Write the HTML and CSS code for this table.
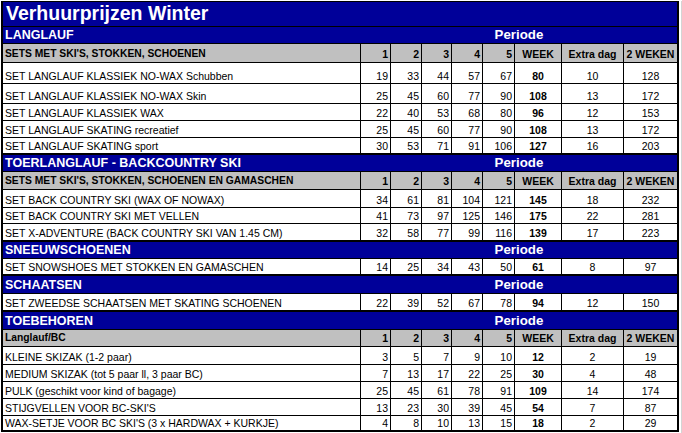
FILE: index.html
```html
<!DOCTYPE html>
<html lang="nl">
<head>
<meta charset="utf-8">
<title>Verhuurprijzen Winter</title>
<link rel="stylesheet" href="styles.css">
</head>
<body>
<div class="page">
  <div class="sheet">
    <div class="row title h24"><div class="tcell">Verhuurprijzen Winter</div></div>

    <div class="row sec h16"><div class="scell">LANGLAUF</div><div class="scell per">Periode</div></div>
    <div class="row hdr h18">
      <div class="cell d">SETS MET SKI'S, STOKKEN, SCHOENEN</div>
      <div class="cell n">1</div><div class="cell n">2</div><div class="cell n">3</div><div class="cell n">4</div><div class="cell n">5</div>
      <div class="cell c">WEEK</div><div class="cell c">Extra dag</div><div class="cell c last">2 WEKEN</div>
    </div>
    <div class="row h20">
      <div class="cell d">SET LANGLAUF KLASSIEK NO-WAX Schubben</div>
      <div class="cell n">19</div><div class="cell n">33</div><div class="cell n">44</div><div class="cell n">57</div><div class="cell n">67</div>
      <div class="cell c b">80</div><div class="cell c">10</div><div class="cell c last">128</div>
    </div>
    <div class="row h19">
      <div class="cell d">SET LANGLAUF KLASSIEK NO-WAX Skin</div>
      <div class="cell n">25</div><div class="cell n">45</div><div class="cell n">60</div><div class="cell n">77</div><div class="cell n">90</div>
      <div class="cell c b">108</div><div class="cell c">13</div><div class="cell c last">172</div>
    </div>
    <div class="row h16">
      <div class="cell d">SET LANGLAUF KLASSIEK WAX</div>
      <div class="cell n">22</div><div class="cell n">40</div><div class="cell n">53</div><div class="cell n">68</div><div class="cell n">80</div>
      <div class="cell c b">96</div><div class="cell c">12</div><div class="cell c last">153</div>
    </div>
    <div class="row h16">
      <div class="cell d">SET LANGLAUF SKATING recreatief</div>
      <div class="cell n">25</div><div class="cell n">45</div><div class="cell n">60</div><div class="cell n">77</div><div class="cell n">90</div>
      <div class="cell c b">108</div><div class="cell c">13</div><div class="cell c last">172</div>
    </div>
    <div class="row h15 thick">
      <div class="cell d">SET LANGLAUF SKATING sport</div>
      <div class="cell n">30</div><div class="cell n">53</div><div class="cell n">71</div><div class="cell n">91</div><div class="cell n">106</div>
      <div class="cell c b">127</div><div class="cell c">16</div><div class="cell c last">203</div>
    </div>

    <div class="row sec h16"><div class="scell">TOERLANGLAUF - BACKCOUNTRY SKI</div><div class="scell per">Periode</div></div>
    <div class="row hdr h17">
      <div class="cell d">SETS MET SKI'S, STOKKEN, SCHOENEN EN GAMASCHEN</div>
      <div class="cell n">1</div><div class="cell n">2</div><div class="cell n">3</div><div class="cell n">4</div><div class="cell n">5</div>
      <div class="cell c">WEEK</div><div class="cell c">Extra dag</div><div class="cell c last">2 WEKEN</div>
    </div>
    <div class="row h17">
      <div class="cell d">SET BACK COUNTRY SKI (WAX OF NOWAX)</div>
      <div class="cell n">34</div><div class="cell n">61</div><div class="cell n">81</div><div class="cell n">104</div><div class="cell n">121</div>
      <div class="cell c b">145</div><div class="cell c">18</div><div class="cell c last">232</div>
    </div>
    <div class="row h15">
      <div class="cell d">SET BACK COUNTRY SKI MET VELLEN</div>
      <div class="cell n">41</div><div class="cell n">73</div><div class="cell n">97</div><div class="cell n">125</div><div class="cell n">146</div>
      <div class="cell c b">175</div><div class="cell c">22</div><div class="cell c last">281</div>
    </div>
    <div class="row h16 thick">
      <div class="cell d">SET X-ADVENTURE (BACK COUNTRY SKI VAN 1.45 CM)</div>
      <div class="cell n">32</div><div class="cell n">58</div><div class="cell n">77</div><div class="cell n">99</div><div class="cell n">116</div>
      <div class="cell c b">139</div><div class="cell c">17</div><div class="cell c last">223</div>
    </div>

    <div class="row sec h16"><div class="scell">SNEEUWSCHOENEN</div><div class="scell per">Periode</div></div>
    <div class="row h15 thick">
      <div class="cell d">SET SNOWSHOES MET STOKKEN EN GAMASCHEN</div>
      <div class="cell n">14</div><div class="cell n">25</div><div class="cell n">34</div><div class="cell n">43</div><div class="cell n">50</div>
      <div class="cell c b">61</div><div class="cell c">8</div><div class="cell c last">97</div>
    </div>

    <div class="row sec h17"><div class="scell">SCHAATSEN</div><div class="scell per">Periode</div></div>
    <div class="row h16 thick">
      <div class="cell d">SET ZWEEDSE SCHAATSEN MET SKATING SCHOENEN</div>
      <div class="cell n">22</div><div class="cell n">39</div><div class="cell n">52</div><div class="cell n">67</div><div class="cell n">78</div>
      <div class="cell c b">94</div><div class="cell c">12</div><div class="cell c last">150</div>
    </div>

    <div class="row sec h17"><div class="scell">TOEBEHOREN</div><div class="scell per">Periode</div></div>
    <div class="row hdr h16">
      <div class="cell d">Langlauf/BC</div>
      <div class="cell n">1</div><div class="cell n">2</div><div class="cell n">3</div><div class="cell n">4</div><div class="cell n">5</div>
      <div class="cell c">WEEK</div><div class="cell c">Extra dag</div><div class="cell c last">2 WEKEN</div>
    </div>
    <div class="row h17">
      <div class="cell d">KLEINE SKIZAK (1-2 paar)</div>
      <div class="cell n">3</div><div class="cell n">5</div><div class="cell n">7</div><div class="cell n">9</div><div class="cell n">10</div>
      <div class="cell c b">12</div><div class="cell c">2</div><div class="cell c last">19</div>
    </div>
    <div class="row h16">
      <div class="cell d">MEDIUM SKIZAK (tot 5 paar ll, 3 paar BC)</div>
      <div class="cell n">7</div><div class="cell n">13</div><div class="cell n">17</div><div class="cell n">22</div><div class="cell n">25</div>
      <div class="cell c b">30</div><div class="cell c">4</div><div class="cell c last">48</div>
    </div>
    <div class="row h16">
      <div class="cell d">PULK (geschikt voor kind of bagage)</div>
      <div class="cell n">25</div><div class="cell n">45</div><div class="cell n">61</div><div class="cell n">78</div><div class="cell n">91</div>
      <div class="cell c b">109</div><div class="cell c">14</div><div class="cell c last">174</div>
    </div>
    <div class="row h16">
      <div class="cell d">STIJGVELLEN VOOR BC-SKI'S</div>
      <div class="cell n">13</div><div class="cell n">23</div><div class="cell n">30</div><div class="cell n">39</div><div class="cell n">45</div>
      <div class="cell c b">54</div><div class="cell c">7</div><div class="cell c last">87</div>
    </div>
    <div class="row h14 thick">
      <div class="cell d">WAX-SETJE VOOR BC SKI'S (3 x HARDWAX + KURKJE)</div>
      <div class="cell n">4</div><div class="cell n">8</div><div class="cell n">10</div><div class="cell n">13</div><div class="cell n">15</div>
      <div class="cell c b">18</div><div class="cell c">2</div><div class="cell c last">29</div>
    </div>
  </div>
  <div class="gutter"></div>
</div>
</body>
</html>
```

FILE: styles.css
```css
html, body {
  margin: 0;
  padding: 0;
  background: #ffffff;
}

body {
  font-family: "Liberation Sans", Arial, sans-serif;
  color: #000;
}

.page {
  display: flex;
  width: 682px;
  height: 433px;
  padding-left: 1px;
  padding-top: 1px;
  box-sizing: border-box;
}

.sheet {
  width: 678px;
  flex: none;
  border-top: 1px solid #000;
  border-left: 2px solid #000;
  border-right: 2px solid #000;
  box-sizing: border-box;
  align-self: flex-start;
}

.gutter {
  flex: none;
  width: 3px;
  box-sizing: border-box;
  border-right: 1px solid #d4d4d4;
  height: 432px;
}

.row {
  display: grid;
  grid-template-columns: 358px 30px 31px 30px 31px 32px 47px 62px 53px;
  border-bottom: 1px solid #000;
  background: #fff;
}

.row.thick { border-bottom-width: 2px; }

.h14 { height: 14px; }
.h15 { height: 15px; }
.h16 { height: 16px; }
.h17 { height: 17px; }
.h18 { height: 18px; }
.h19 { height: 19px; }
.h20 { height: 20px; }
.h24 { height: 24px; }

.cell {
  display: flex;
  align-items: flex-end;
  border-right: 1px solid #000;
  padding: 0 2px 1px 2px;
  font-size: 10.5px;
  line-height: 12px;
  white-space: nowrap;
  overflow: hidden;
}

.cell.last { border-right: 0; }
.cell.d { justify-content: flex-start; }
.cell.n { justify-content: flex-end; }
.cell.c { justify-content: center; }
.cell.b { font-weight: bold; }

.hdr { background: #c0c0c0; }
.hdr .cell { font-weight: bold; padding-bottom: 2px; }
.hdr .cell.d { font-size: 10.3px; }

.title {
  display: flex;
  background: #000099;
  color: #fff;
}

.tcell {
  display: flex;
  align-items: flex-end;
  padding: 0 3px 2px 3px;
  font-size: 19.5px;
  line-height: 22px;
  font-weight: bold;
  white-space: nowrap;
}

.sec {
  grid-template-columns: 358px 1fr;
  background: #000099;
  color: #fff;
}

.scell {
  display: flex;
  align-items: flex-end;
  padding: 0 2px 1px 2px;
  font-size: 12.5px;
  line-height: 14px;
  font-weight: bold;
  white-space: nowrap;
}

.scell.per {
  justify-content: center;
  font-size: 13.3px;
}
```
